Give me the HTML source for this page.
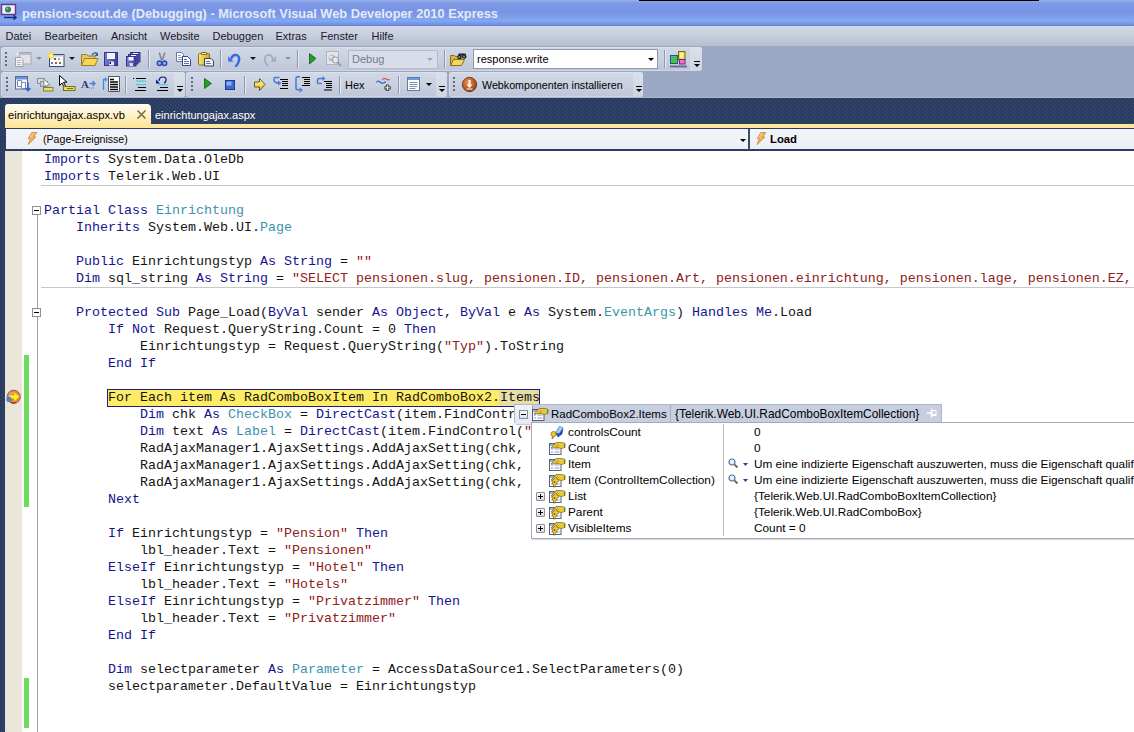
<!DOCTYPE html>
<html><head><meta charset="utf-8">
<style>
*{margin:0;padding:0;box-sizing:border-box}
html,body{width:1134px;height:732px;overflow:hidden;background:#9ba8c3;font-family:"Liberation Sans",sans-serif;position:relative}
.a{position:absolute}
svg{position:absolute;overflow:visible}
#title{left:0;top:0;width:1134px;height:26px;background:linear-gradient(#9ab3ec 0px,#7e9ae5 3px,#7793e3 12px,#7fa2ec 18px,#82a8ef 21px,#6f8be0 25px,#6580d8 26px)}
#blackbar{left:639px;top:0;width:400px;height:1px;background:#000}
#ttext{left:22px;top:5.7px;font-size:12.8px;font-weight:bold;color:#e3eafa;white-space:nowrap;line-height:16px}
#menu{left:0;top:26px;width:1134px;height:20px;background:linear-gradient(#d2d8e6,#c7cedf 50%,#b6bece)}
#menu span{position:absolute;top:4px;font-size:11px;line-height:13px;color:#1a1a2a}
.tb{position:absolute;border-radius:3px;background:linear-gradient(#d1d8e6,#c9d0e0 50%,#bec6d7);box-shadow:inset 0 0 0 1px rgba(255,255,255,0.25)}
.grip{position:absolute;width:2px;background:repeating-linear-gradient(#5f6b84 0 2px,transparent 2px 4px)}
.sep{position:absolute;width:1px;background:#8d98b0;box-shadow:1px 0 0 #e6eaf2}
.ovf{position:absolute;border-radius:0 3px 3px 0;background:linear-gradient(#dbe0ec,#cfd5e3)}
.ovf i{position:absolute;left:3px;top:14px;width:6px;height:1px;background:#000}
.ovf b{position:absolute;left:3px;top:17px;width:0;height:0;border-left:3px solid transparent;border-right:3px solid transparent;border-top:3px solid #000}
.dd{position:absolute;width:0;height:0;border-left:3px solid transparent;border-right:3px solid transparent;border-top:3px solid #000}
#tabarea{left:0;top:98px;width:1134px;height:634px;background-color:#2a3b60;background-image:radial-gradient(circle at 1.5px 1.5px,rgba(90,110,150,0.5) 0.5px,transparent 0.9px),radial-gradient(circle at 3.5px 3.5px,rgba(90,110,150,0.5) 0.5px,transparent 0.9px);background-size:4px 4px}
#tab{left:5px;top:104px;width:146px;height:21px;border-radius:3px 4px 0 0;background:linear-gradient(#fffdf4,#fff3cc 50%,#fde6a0)}
#band{left:5px;top:124px;width:1129px;height:4px;background:#fde79c}
#nav{left:6px;top:129px;width:1128px;height:20px;background:linear-gradient(#f4f5fa,#eceef6)}
#code{left:5px;top:151px;width:1129px;height:581px;background:#fff}
#margin{left:5px;top:151px;width:17px;height:581px;background:#e9e6d9}
pre{position:absolute;left:44px;top:151px;font-family:"Liberation Mono",monospace;font-size:13.33px;line-height:17px;color:#141414;white-space:pre}
.k{color:#14148e}
.t{color:#3c94ac}
.s{color:#8e2020}
.hl{}
.hi{}
.sepl{position:absolute;left:41px;width:1093px;height:1px;background:#c8c8c8}
.cbox{position:absolute;left:32px;width:9px;height:9px;border:1px solid #909090;background:#fff}
.cbox:after{content:"";position:absolute;left:1px;top:3px;width:5px;height:1px;background:#000}
#dt{font-size:11.8px;color:#000}
.dtrow{position:absolute;height:16px;line-height:18px;white-space:nowrap}
.pbox{position:absolute;left:536px;width:9px;height:9px;border:1px solid #8a8e96;border-radius:1px;background:linear-gradient(#fff,#d8dade)}
.pbox:before{content:"";position:absolute;left:1px;top:3px;width:5px;height:1px;background:#000}
.pbox:after{content:"";position:absolute;left:3px;top:1px;width:1px;height:5px;background:#000}
</style></head><body>

<div id="title" class="a"></div>
<div id="blackbar" class="a"></div>
<svg style="left:0;top:0" width="24" height="26">
<rect x="1.5" y="4.5" width="14" height="10" fill="#f4ecf6" stroke="#5a3a8a" stroke-width="1.4"/>
<circle cx="8" cy="9.5" r="3" fill="#2e7a5a"/><circle cx="7.3" cy="8.6" r="1.2" fill="#6ac0a0"/>
<path d="M4 17.5H15.5M13.5 15.2L16.2 17.5L13.5 19.8" stroke="#1e2a8a" stroke-width="1.3" fill="none"/>
</svg>
<div id="ttext" class="a">pension-scout.de (Debugging) - Microsoft Visual Web Developer 2010 Express</div>
<div id="menu" class="a">
<span style="left:5.5px">Datei</span>
<span style="left:44.5px">Bearbeiten</span>
<span style="left:111px">Ansicht</span>
<span style="left:160px">Website</span>
<span style="left:212.5px">Debuggen</span>
<span style="left:275.5px">Extras</span>
<span style="left:320.5px">Fenster</span>
<span style="left:371.5px">Hilfe</span>
</div>

<!-- toolbar 1 -->
<div class="tb" style="left:1px;top:47px;width:701px;height:24px"></div>
<div class="ovf" style="left:690px;top:47px;width:12px;height:24px"><i style="left:4px"></i><b style="left:4px"></b></div>
<div class="grip" style="left:5px;top:52px;height:14px"></div>
<svg style="left:15px;top:52px" width="17" height="15">
<rect x="4.5" y="0.5" width="11.5" height="11.5" fill="#e2e4ea" stroke="#a4a8b0"/><rect x="5" y="1" width="10.5" height="2" fill="#b8bcc4"/>
<path d="M0.5 5.5h5.5l2 2v7h-7.5z" fill="#f2f2f4" stroke="#9ca0a8"/><path d="M2 8.5h4M2 10.5h4M2 12.5h4" stroke="#b0b4bc"/>
<path d="M2.5 0v4M0.5 2h4M1 0.5l3 3M4 0.5l-3 3" stroke="#e8e8ec" stroke-width="0.8"/>
</svg>
<div class="dd" style="left:36px;top:57px;border-top-color:#8a909c"></div>
<svg style="left:47px;top:52px" width="18" height="15">
<rect x="2.5" y="2.5" width="14.5" height="12" fill="#fbfbfd" stroke="#3a4a7a"/><rect x="3" y="3" width="14" height="1.5" fill="#b8c4e0"/>
<rect x="7" y="6" width="2" height="2" fill="#4a5ac0"/><rect x="11" y="6" width="2" height="2" fill="#e8a030"/>
<rect x="4" y="10" width="2" height="2" fill="#3a8ae0"/><rect x="8" y="10" width="2" height="2" fill="#d04a20"/><rect x="12" y="10" width="2" height="2" fill="#30a030"/>
<path d="M4 0v7.5M0.3 3.7h7.5M1.3 1l5.4 5.4M6.7 1l-5.4 5.4" stroke="#f4d838" stroke-width="1.4"/><circle cx="4" cy="3.7" r="1.6" fill="#fff8b0"/>
</svg>
<div class="dd" style="left:69px;top:57px;border-top-color:#10182a"></div>
<svg style="left:81px;top:51px" width="18" height="16">
<path d="M0.5 3.5h5l1.5 1.5h7v9.5h-13.5z" fill="#e8c860" stroke="#9a7a30"/>
<path d="M0.5 14.5l3-7h13.5l-3 7z" fill="#f8d850" stroke="#a08030"/>
<path d="M11 4q3-4 5.5-0.5" stroke="#3a5aa8" stroke-width="1.5" fill="none"/><path d="M17 1.5v3.5h-3.5z" fill="#3a5aa8"/>
</svg>
<svg style="left:104px;top:52px" width="15" height="14">
<defs><linearGradient id="fl" x1="0" x2="1"><stop offset="0" stop-color="#7a7ad8"/><stop offset="1" stop-color="#3c3ca0"/></linearGradient></defs>
<rect x="0.5" y="0.5" width="13" height="13" fill="url(#fl)" stroke="#34348a"/>
<rect x="3" y="1" width="8" height="6" fill="#f2f4fc"/>
<rect x="5" y="9.5" width="5" height="4" fill="#e8e8f2"/><rect x="5.5" y="10" width="1.5" height="2" fill="#101030"/>
</svg>
<svg style="left:126px;top:52px" width="15" height="15">
<rect x="4.5" y="0.5" width="9.5" height="9.5" fill="#5a5ac0" stroke="#34348a"/><rect x="7" y="1" width="5" height="1.5" fill="#f0f2fc"/>
<rect x="2.5" y="2.5" width="9.5" height="9.5" fill="#5252b8" stroke="#34348a"/><rect x="5" y="3" width="5" height="1.5" fill="#f0f2fc"/>
<rect x="0.5" y="4.5" width="9.5" height="9.5" fill="url(#fl)" stroke="#34348a"/>
<rect x="2.5" y="5" width="5" height="3.5" fill="#f2f4fc"/><rect x="3.5" y="11" width="3.5" height="3" fill="#d8d8e8"/>
</svg>
<div class="sep" style="left:148px;top:50px;height:18px"></div>
<svg style="left:156px;top:52px" width="12" height="15">
<path d="M3.2 0.5L5.6 8M8.8 0.5L6.4 8" stroke="#80848e" stroke-width="1.5"/>
<circle cx="3.5" cy="11.3" r="2.2" fill="#a0b8f0" stroke="#3050b8" stroke-width="1.6"/>
<circle cx="8.5" cy="11.3" r="2.2" fill="#a0b8f0" stroke="#3050b8" stroke-width="1.6"/>
</svg>
<svg style="left:176px;top:52px" width="16" height="14">
<path d="M0.5 0.5h5l2 2v7h-7z" fill="#fff" stroke="#6a78a0"/><path d="M2 3.5h3M2 5.5h4M2 7.5h4" stroke="#90a0c8"/>
<path d="M6.5 4.5h5l3 3v6h-8z" fill="#fff" stroke="#34448a"/><path d="M8 7.5h3M8 9.5h5M8 11.5h5" stroke="#5a70b8"/>
</svg>
<svg style="left:198px;top:51px" width="17" height="16">
<defs><linearGradient id="cb" x1="0" x2="1"><stop offset="0" stop-color="#f8e880"/><stop offset="1" stop-color="#d0a818"/></linearGradient></defs>
<rect x="0.5" y="2.5" width="11" height="11.5" rx="1" fill="url(#cb)" stroke="#8a7020"/>
<path d="M3.5 3.5v-2h5v2z" fill="#f8f0b0" stroke="#8a7020"/><circle cx="6" cy="1.6" r="0.8" fill="#8a7020"/>
<path d="M6.5 7.5h6.5l2.5 2.5v5h-9z" fill="#f0f2f6" stroke="#38405a"/><path d="M8 10.5h4M8 12.5h5" stroke="#6a7898"/>
</svg>
<div class="sep" style="left:220px;top:50px;height:18px"></div>
<svg style="left:228px;top:52px" width="14" height="15">
<path d="M3 7.5q1-5 5.5-4.5q4 1.5 2 7q-1 2.5-2.5 4" stroke="#3a6ae0" stroke-width="2.4" fill="none" stroke-linecap="round"/>
<path d="M0 4.2v5.6h5.6z" fill="#4a7ae8"/>
</svg>
<div class="dd" style="left:250px;top:57px;border-top-color:#10182a"></div>
<svg style="left:263px;top:52px" width="14" height="15">
<path d="M10 7.5q-1-5-5.5-4.5q-4 1.5-2 7q1 2.5 2.5 4" stroke="#a8acb8" stroke-width="1.8" fill="none"/>
<path d="M13 4.2v5.6h-5.6z" fill="#a8acb8"/>
</svg>
<div class="dd" style="left:285px;top:57px;border-top-color:#8a909c"></div>
<div class="sep" style="left:297px;top:50px;height:18px"></div>
<svg style="left:309px;top:53px" width="8" height="12"><path d="M0.5 0.5L7 5.5L0.5 11z" fill="#20a020" stroke="#106010" stroke-width="0.8"/></svg>
<svg style="left:326px;top:51px" width="17" height="17">
<rect x="0.5" y="0.5" width="12" height="13" fill="#e4e6ec" stroke="#b0b4bc"/>
<circle cx="6" cy="7" r="3.5" fill="#b8bcc4"/><circle cx="5" cy="6" r="1.5" fill="#e8eaee"/>
<circle cx="9.5" cy="9" r="3" fill="#e8eaee" stroke="#a0a4ac" stroke-width="1.2"/>
<path d="M11.5 11.5l3.5 3.5" stroke="#90949c" stroke-width="1.6"/>
</svg>
<div class="a" style="left:348px;top:50px;width:90px;height:19px;border:1px solid #b4bccc;background:#d8dde9"></div>
<div class="a" style="left:352px;top:52px;font-size:11px;line-height:14px;color:#767c8a">Debug</div>
<div class="dd" style="left:427px;top:58px;border-top-color:#a0a6b0"></div>
<div class="sep" style="left:444px;top:50px;height:18px"></div>
<svg style="left:450px;top:51px" width="17" height="16">
<path d="M0.5 4.5h4l1 1h5v9h-10z" fill="#d8b448" stroke="#8a7020"/>
<path d="M0.5 14.5l3-6h11l-3 6z" fill="#f4d860" stroke="#8a7020"/>
<path d="M8.5 3.5h7" stroke="#202020" stroke-width="2"/>
<circle cx="9.5" cy="6" r="2.3" fill="#202020"/><circle cx="14.2" cy="5.5" r="2.3" fill="#202020"/>
<circle cx="9.3" cy="6" r="0.9" fill="#a0a0a0"/><circle cx="14" cy="5.5" r="0.9" fill="#a0a0a0"/>
</svg>
<div class="a" style="left:473px;top:49px;width:185px;height:20px;border:1px solid #8d97ad;background:#fff"></div>
<div class="a" style="left:477px;top:52px;font-size:11px;line-height:14px;color:#000">response.write</div>
<div class="dd" style="left:648px;top:58px;border-top-color:#000"></div>
<div class="sep" style="left:664px;top:50px;height:18px"></div>
<svg style="left:670px;top:51px" width="19" height="17">
<rect x="0.5" y="4.5" width="7" height="8" fill="#40b8d0" stroke="#205a78"/>
<rect x="1.5" y="6" width="5" height="6" fill="#48c040"/>
<rect x="8.5" y="0.5" width="6.5" height="8" fill="#f0d838" stroke="#7a6a10"/>
<rect x="10" y="2" width="3.5" height="5" fill="#f8f0a0"/>
<rect x="9.5" y="8.5" width="5.5" height="4.5" fill="#f070d0" stroke="#80207a"/>
<path d="M0 15.5h17" stroke="#6a6a98" stroke-width="2"/>
</svg>

<!-- toolbar 2a -->
<div class="tb" style="left:1px;top:72px;width:184px;height:25px"></div>
<div class="ovf" style="left:174px;top:72px;width:11px;height:25px"><i style="left:3px"></i><b style="left:3px"></b></div>
<div class="grip" style="left:6px;top:77px;height:14px"></div>
<svg style="left:15px;top:76px" width="16" height="16">
<rect x="0.5" y="0.5" width="12" height="12.5" fill="#f4f6fa" stroke="#5a6a98"/><rect x="1" y="1" width="11" height="2.5" fill="#6a94e0"/>
<path d="M2.5 4.5h4v6h-4z" fill="#fff" stroke="#7888b0"/><path d="M6.5 6.5h4v6h-4z" fill="#fff" stroke="#7888b0"/>
<path d="M13 6.5v8M10.5 12l2.5 2.8l2.5-2.8" stroke="#2a5ac8" stroke-width="1.4" fill="none"/>
</svg>
<svg style="left:37px;top:76px" width="17" height="16">
<rect x="0.5" y="2.5" width="7" height="5" fill="#d8dae0" stroke="#8a8e98"/>
<rect x="3.5" y="5.5" width="7" height="5" fill="#c8cad0" stroke="#8a8e98"/>
<path d="M7 3l6 6h-3l2 4h-1.5l-2-4l-1.5 2z" fill="#fff" stroke="#6a6e78" stroke-width="0.7"/>
<rect x="6.5" y="11.5" width="9.5" height="3.5" fill="#e8e070" stroke="#808030"/>
</svg>
<svg style="left:59px;top:75px" width="17" height="17">
<path d="M0.5 0.5v10l2.5-2.5l2 4l1.5-0.8l-2-4h3.5z" fill="#fff" stroke="#000"/>
<rect x="4.5" y="11.5" width="11.5" height="4" fill="#e8e050" stroke="#707020"/>
<path d="M8 13.5h6" stroke="#707020"/>
</svg>
<svg style="left:81px;top:78px" width="16" height="12">
<text x="0" y="10" font-family="Liberation Serif" font-weight="bold" font-size="11" fill="#2a3a80">A</text>
<path d="M8.5 5.5h5M11.5 3l2.5 2.5l-2.5 2.5" stroke="#5a7ad0" stroke-width="1.3" fill="none"/>
<path d="M8 10h1M10 10h1M12 10h1" stroke="#5a7ad0"/>
</svg>
<svg style="left:102px;top:76px" width="18" height="16">
<path d="M1.5 14v-10.5h2.5" stroke="#3a90e0" stroke-width="1.3" fill="none"/><path d="M3 1l2.5 2.5l-2.5 2.5z" fill="#3a90e0"/>
<path d="M6.5 0.5h11v15h-11z" fill="#fff" stroke="#505560"/>
<path d="M8 3.5h4M8 6h8M8 8.5h8M8 11h8M8 13.5h8" stroke="#000" stroke-width="1.4"/>
</svg>
<div class="sep" style="left:125px;top:76px;height:18px"></div>
<svg style="left:132px;top:72px" width="16" height="22">
<path d="M1 6.5h1.2M4 6.5h10" stroke="#000" stroke-width="1.1"/>
<path d="M4 9.2h10M4 12.7h10" stroke="#48d0d8" stroke-width="1.2"/>
<path d="M6 15.5h8M3 18.5h11" stroke="#000" stroke-width="1.1"/>
</svg>
<svg style="left:155px;top:72px" width="15" height="22">
<path d="M4 9q0-4 4-4q3.5 0 3 3.5q-0.5 2-2 2.5" stroke="#101080" stroke-width="1.2" fill="none"/>
<path d="M1 7.5v4h4z" fill="#101080"/>
<path d="M3 12.7h10" stroke="#48d0d8" stroke-width="1.2"/>
<path d="M5 15.5h8M2 18.5h11" stroke="#000" stroke-width="1.1"/>
</svg>

<!-- toolbar 2b -->
<div class="tb" style="left:186px;top:72px;width:261px;height:25px"></div>
<div class="ovf" style="left:436px;top:72px;width:11px;height:25px"><i></i><b></b></div>
<div class="grip" style="left:191px;top:77px;height:14px"></div>
<svg style="left:204px;top:78px" width="9" height="12"><path d="M0.5 0.5L7.5 5.5L0.5 10.5z" fill="#20a020" stroke="#106010" stroke-width="0.8"/></svg>
<svg style="left:225px;top:80px" width="10" height="10"><rect x="0.5" y="0.5" width="9" height="9" fill="#3a6ad8" stroke="#203a90"/><rect x="1.5" y="1.5" width="5" height="4" fill="#8ab0f0"/></svg>
<div class="sep" style="left:244px;top:76px;height:18px"></div>
<svg style="left:254px;top:78px" width="12" height="13">
<defs><linearGradient id="ya" x1="0" x2="0" y1="0" y2="1"><stop offset="0" stop-color="#fff8b0"/><stop offset="1" stop-color="#e8c020"/></linearGradient></defs>
<path d="M0.5 4h5v-3.5l5.5 6l-5.5 6v-3.5h-5z" fill="url(#ya)" stroke="#5a4a10" stroke-width="0.9"/>
</svg>
<svg style="left:273px;top:76px" width="16" height="14">
<path d="M6.5 1.5h-4q-2 0-1.5 3q0.5 2.5 5 2.5" stroke="#4a7ad8" stroke-width="1.5" fill="none"/><path d="M5 4.5l3.5 2.5l-3.5 2.5z" fill="#4a7ad8"/>
<path d="M7 3.5h8M9 5.5h6M9 7.5h6M9 9.5h6M7 12.5h8" stroke="#000" stroke-width="1.2"/>
</svg>
<svg style="left:295px;top:76px" width="16" height="17">
<path d="M5 0.8h-2.5q-1.5 0-1.5 1.5v10q0 1.5 1.5 1.5h2" stroke="#4a7ad8" stroke-width="1.5" fill="none"/><path d="M4.5 11.5l3.5 2.5l-3.5 2.5z" fill="#4a7ad8"/>
<path d="M7 1.5h8M9 3.5h6M9 5.5h6M9 7.5h6M7 9.5h8" stroke="#000" stroke-width="1.2"/>
</svg>
<svg style="left:316px;top:76px" width="17" height="16">
<path d="M1.5 7v-2.5q0-2 2-2h4" stroke="#4a7ad8" stroke-width="1.5" fill="none"/><path d="M6.5 0l3 2.5l-3 2.5z" fill="#4a7ad8"/>
<path d="M1 7.5h5" stroke="#4a7ad8" stroke-width="1.3"/>
<path d="M8 5.5h8M10 7.5h6M10 9.5h6M10 11.5h6M8 14h8" stroke="#000" stroke-width="1.2"/>
</svg>
<div class="sep" style="left:339px;top:76px;height:18px"></div>
<div class="a" style="left:345px;top:79px;font-size:11px;line-height:13px;color:#000">Hex</div>
<svg style="left:376px;top:77px" width="17" height="15">
<path d="M0.5 5.5q1.5-2.5 3.5-0.5t3.5 1q1.5-1 2.5-1" stroke="#3a6ad8" stroke-width="1.3" fill="none"/>
<path d="M6 3q2-2.5 4-1t4 0.5" stroke="#e05050" stroke-width="1.2" fill="none"/>
<path d="M11.5 7.5v6.5M8.3 10.8h6.5" stroke="#505050" stroke-width="3.2"/>
<path d="M11.5 8.5v4.5M9.3 10.8h4.5" stroke="#e8e8e8" stroke-width="1.1"/>
</svg>
<div class="sep" style="left:398px;top:76px;height:18px"></div>
<svg style="left:407px;top:77px" width="14" height="15">
<rect x="0.5" y="0.5" width="12" height="13" fill="#fbfcfe" stroke="#6a7a9a"/><rect x="1" y="1" width="11" height="2" fill="#6a9ae0"/>
<path d="M2.5 5.5h8M2.5 7.5h8M2.5 9.5h8M2.5 11.5h6" stroke="#8090a8"/>
</svg>
<div class="dd" style="left:426px;top:83px;border-top-color:#000"></div>

<!-- toolbar 2c -->
<div class="tb" style="left:449px;top:72px;width:194px;height:25px"></div>
<div class="ovf" style="left:633px;top:72px;width:10px;height:25px"><i style="left:2.5px"></i><b style="left:2.5px"></b></div>
<div class="grip" style="left:453px;top:77px;height:14px"></div>
<svg style="left:462px;top:77px" width="16" height="16">
<defs><radialGradient id="bb" cx="0.4" cy="0.35" r="0.7"><stop offset="0" stop-color="#f09050"/><stop offset="1" stop-color="#9a3810"/></radialGradient></defs>
<circle cx="7.5" cy="7.5" r="7.2" fill="url(#bb)" stroke="#6a2a10" stroke-width="0.8"/>
<path d="M7.5 3v6" stroke="#fff" stroke-width="2"/><path d="M4.5 7.5h6l-3 3.5z" fill="#fff"/>
<path d="M4.5 12h6" stroke="#fff" stroke-width="1"/>
</svg>
<div class="a" style="left:482px;top:79px;font-size:10.7px;line-height:13px;color:#000;white-space:nowrap">Webkomponenten installieren</div>

<!-- tabs -->
<div class="a" style="left:0;top:97px;width:1134px;height:1px;background:#aeb8cc"></div>
<div id="tabarea" class="a"></div>
<div id="tab" class="a"></div>
<div id="band" class="a"></div>
<div class="a" style="left:8px;top:108px;font-size:11.2px;line-height:14px;color:#000;white-space:nowrap">einrichtungajax.aspx.vb</div>
<svg style="left:137px;top:110px" width="9" height="9"><path d="M0.5 0.5L8.5 8.5M8.5 0.5L0.5 8.5" stroke="#786a38" stroke-width="1.5"/></svg>
<div class="a" style="left:155px;top:108px;font-size:11px;line-height:14px;color:#fff;white-space:nowrap">einrichtungajax.aspx</div>

<!-- nav bar -->
<div id="nav" class="a"></div>
<div class="a" style="left:748px;top:129px;width:2px;height:21px;background:#3c4a6c"></div>
<svg style="left:27px;top:132px" width="11" height="13"><defs><linearGradient id="bg27" x1="0" x2="1" y1="0" y2="1"><stop offset="0" stop-color="#fce08a"/><stop offset="1" stop-color="#e08a30"/></linearGradient></defs><path d="M4.8 0.5H9.8L6.6 5H8.8L1.2 12.5L3.4 6.6H1.2Z" fill="url(#bg27)" stroke="#c07828" stroke-width="0.7"/></svg>
<div class="a" style="left:43px;top:133px;font-size:10.6px;line-height:13px;color:#000;white-space:nowrap">(Page-Ereignisse)</div>
<div class="dd" style="left:740px;top:139px;border-top-color:#000"></div>
<svg style="left:756px;top:132px" width="11" height="13"><defs><linearGradient id="bg756" x1="0" x2="1" y1="0" y2="1"><stop offset="0" stop-color="#fce08a"/><stop offset="1" stop-color="#e08a30"/></linearGradient></defs><path d="M4.8 0.5H9.8L6.6 5H8.8L1.2 12.5L3.4 6.6H1.2Z" fill="url(#bg756)" stroke="#c07828" stroke-width="0.7"/></svg>
<div class="a" style="left:770px;top:133px;font-size:11.3px;font-weight:bold;line-height:13px;color:#000;white-space:nowrap">Load</div>

<!-- code area -->
<div id="code" class="a"></div>
<div id="margin" class="a"></div>
<div class="a" style="left:24px;top:355px;width:5px;height:152px;background:#6cdc5c"></div>
<div class="a" style="left:24px;top:678px;width:5px;height:50px;background:#6cdc5c"></div>
<div class="a" style="left:37px;top:215px;width:1px;height:517px;background:#a0a0a0"></div>
<div class="a" style="left:107px;top:389px;width:433px;height:18px;border:1px solid #1c1c88;background:#fdec64"></div>
<div class="a" style="left:499px;top:390px;width:40px;height:16px;background:#e6dea4"></div>
<div class="sepl" style="top:185px"></div>
<div class="sepl" style="top:287px"></div>
<div class="cbox" style="top:206px"></div>
<div class="cbox" style="top:308px"></div>
<svg style="left:6px;top:389px" width="16" height="16">
<circle cx="7.7" cy="7.8" r="6.6" fill="#d88850" stroke="#a05030" stroke-width="0.9"/>
<path d="M3.5 5.2q3-2.5 6 0" stroke="#f0a0a0" stroke-width="1.5" fill="none"/>
<path d="M3 6h5v-3.2l5.6 5l-5.6 5v-3h-5z" fill="#fff21a" stroke="#d09010" stroke-width="0.5"/>
<circle cx="3" cy="10.4" r="2.6" fill="#5080d0"/>
<path d="M5 13.5q3 1 5 0" stroke="#b03020" stroke-width="1.2" fill="none"/>
</svg>

<pre><span class="k">Imports</span> System.Data.OleDb
<span class="k">Imports</span> Telerik.Web.UI

<span class="k">Partial</span> <span class="k">Class</span> <span class="t">Einrichtung</span>
    <span class="k">Inherits</span> System.Web.UI.<span class="t">Page</span>

    <span class="k">Public</span> Einrichtungstyp <span class="k">As</span> <span class="k">String</span> = <span class="s">""</span>
    <span class="k">Dim</span> sql_string <span class="k">As</span> <span class="k">String</span> = <span class="s">"SELECT pensionen.slug, pensionen.ID, pensionen.Art, pensionen.einrichtung, pensionen.lage, pensionen.EZ,</span>

    <span class="k">Protected</span> <span class="k">Sub</span> Page_Load(<span class="k">ByVal</span> sender <span class="k">As</span> <span class="k">Object</span>, <span class="k">ByVal</span> e <span class="k">As</span> System.<span class="t">EventArgs</span>) <span class="k">Handles</span> <span class="k">Me</span>.Load
        <span class="k">If</span> <span class="k">Not</span> Request.QueryString.Count = 0 <span class="k">Then</span>
            Einrichtungstyp = Request.QueryString(<span class="s">"Typ"</span>).ToString
        <span class="k">End</span> <span class="k">If</span>

        <span class="hl">For Each item As RadComboBoxItem In RadComboBox2.<span class="hi">Items</span></span>
            <span class="k">Dim</span> chk <span class="k">As</span> <span class="t">CheckBox</span> = <span class="k">DirectCast</span>(item.FindControl(<span class="s">"chk"</span>), <span class="t">CheckBox</span>)
            <span class="k">Dim</span> text <span class="k">As</span> <span class="t">Label</span> = <span class="k">DirectCast</span>(item.FindControl(<span class="s">"lbl"</span>), <span class="t">Label</span>)
            RadAjaxManager1.AjaxSettings.AddAjaxSetting(chk, text)
            RadAjaxManager1.AjaxSettings.AddAjaxSetting(chk, text)
            RadAjaxManager1.AjaxSettings.AddAjaxSetting(chk, text)
        <span class="k">Next</span>

        <span class="k">If</span> Einrichtungstyp = <span class="s">"Pension"</span> <span class="k">Then</span>
            lbl_header.Text = <span class="s">"Pensionen"</span>
        <span class="k">ElseIf</span> Einrichtungstyp = <span class="s">"Hotel"</span> <span class="k">Then</span>
            lbl_header.Text = <span class="s">"Hotels"</span>
        <span class="k">ElseIf</span> Einrichtungstyp = <span class="s">"Privatzimmer"</span> <span class="k">Then</span>
            lbl_header.Text = <span class="s">"Privatzimmer"</span>
        <span class="k">End</span> <span class="k">If</span>

        <span class="k">Dim</span> selectparameter <span class="k">As</span> <span class="t">Parameter</span> = AccessDataSource1.SelectParameters(0)
        selectparameter.DefaultValue = Einrichtungstyp

</pre>
<!-- datatip -->
<div id="dt">
<div class="a" style="left:514px;top:404px;width:428px;height:19px;border:1px solid #b0b8c8;background:#c6cee0"></div>
<div class="a" style="left:515px;top:405px;width:17px;height:19px;background:linear-gradient(#f0f2f8,#e6e9f1);box-shadow:1px 1px 1px rgba(0,0,0,0.2)"></div>
<div class="a" style="left:519px;top:410px;width:9px;height:9px;border:1px solid #8890a0;background:linear-gradient(#fff,#dde0e8)"></div>
<div class="a" style="left:521px;top:414px;width:5px;height:1px;background:#000"></div>
<svg style="left:532px;top:405px" width="17" height="17"><rect x="0.5" y="4.5" width="11.5" height="11" fill="#fff" stroke="#506080"/><rect x="1" y="5" width="10.5" height="2" fill="#98b0e0"/><path d="M2 10h2M5.5 10h5M2 13h2M5.5 13h5" stroke="#8898b8"/><path d="M2 9L7 3.5H13.5L16 4.5V8.5L12.5 9.5L9 8.5Z" fill="#ecc838" stroke="#7a6418" stroke-width="0.7"/><path d="M4 7l2-2M6 8l3-3M8 8l2-2" stroke="#a08a20" stroke-width="0.6"/><path d="M15.5 4.5v4" stroke="#4a9a3a" stroke-width="1.2"/></svg>
<div class="dtrow" style="left:551px;top:406px;line-height:17px;font-size:11.5px">RadComboBox2.Items</div>
<div class="a" style="left:670px;top:405px;width:1px;height:17px;background:#a8b0c0"></div>
<div class="dtrow" style="left:675px;top:406px;line-height:17px;font-size:11.9px">{Telerik.Web.UI.RadComboBoxItemCollection}</div>
<svg style="left:927px;top:408px" width="11" height="10"><path d="M0 5h4" stroke="#fff" stroke-width="1.6"/><rect x="4.5" y="2" width="5" height="6" fill="#fff"/><rect x="5.5" y="3" width="3" height="3" fill="#c6cee0"/><path d="M4.5 0.5v9" stroke="#fff" stroke-width="1.4"/></svg>
<div class="a" style="left:531px;top:422px;width:603px;height:117px;border:1px solid #a8acb8;border-right:none;background:#fff;box-shadow:1px 1px 1px rgba(0,0,0,0.15)"></div>
<div class="a" style="left:723px;top:424px;width:1px;height:112px;background:#b8b8b8"></div>
<svg style="left:549px;top:423px" width="16" height="16"><path d="M6.5 9.5L10.5 3.5L14 5L13 11L9 14Z" fill="#2a50c0" stroke="#1a3080" stroke-width="0.6"/><path d="M6.5 9.5L10.5 3.5L14 5L10 10.5Z" fill="#a8c8f0"/><circle cx="4.5" cy="11" r="2.6" fill="#f0c838" stroke="#8a6a18" stroke-width="0.7"/><path d="M3.5 13l-0.5 3l2-2" stroke="#8a6a18" stroke-width="0.8" fill="#f0c838"/></svg>
<div class="dtrow" style="left:568px;top:423px">controlsCount</div>
<div class="dtrow" style="left:754px;top:423px">0</div>
<svg style="left:549px;top:439px" width="17" height="17"><rect x="0.5" y="4.5" width="11.5" height="11" fill="#fff" stroke="#506080"/><rect x="1" y="5" width="10.5" height="2" fill="#98b0e0"/><path d="M2 10h2M5.5 10h5M2 13h2M5.5 13h5" stroke="#8898b8"/><path d="M2 9L7 3.5H13.5L16 4.5V8.5L12.5 9.5L9 8.5Z" fill="#ecc838" stroke="#7a6418" stroke-width="0.7"/><path d="M4 7l2-2M6 8l3-3M8 8l2-2" stroke="#a08a20" stroke-width="0.6"/><path d="M15.5 4.5v4" stroke="#4a9a3a" stroke-width="1.2"/></svg>
<div class="dtrow" style="left:568px;top:439px">Count</div>
<div class="dtrow" style="left:754px;top:439px">0</div>
<svg style="left:549px;top:455px" width="17" height="17"><rect x="0.5" y="4.5" width="11.5" height="11" fill="#fff" stroke="#506080"/><rect x="1" y="5" width="10.5" height="2" fill="#98b0e0"/><path d="M2 10h2M5.5 10h5M2 13h2M5.5 13h5" stroke="#8898b8"/><path d="M2 9L7 3.5H13.5L16 4.5V8.5L12.5 9.5L9 8.5Z" fill="#ecc838" stroke="#7a6418" stroke-width="0.7"/><path d="M4 7l2-2M6 8l3-3M8 8l2-2" stroke="#a08a20" stroke-width="0.6"/><path d="M15.5 4.5v4" stroke="#4a9a3a" stroke-width="1.2"/></svg>
<div class="dtrow" style="left:568px;top:455px">Item</div>
<svg style="left:728px;top:458px" width="22" height="11"><circle cx="4" cy="4" r="3" fill="#e8f0ff" stroke="#5070a0" stroke-width="1.2"/><path d="M6.5 6.5l3 3" stroke="#806040" stroke-width="1.8"/><path d="M15 5h5l-2.5 3z" fill="#2040a0"/></svg>
<div class="dtrow" style="left:754px;top:455px">Um eine indizierte Eigenschaft auszuwerten, muss die Eigenschaft qualifiziert</div>
<svg style="left:549px;top:471px" width="17" height="17"><rect x="0.5" y="4.5" width="11.5" height="11" fill="#fff" stroke="#506080"/><rect x="1" y="5" width="10.5" height="2" fill="#98b0e0"/><path d="M2 10h2M5.5 10h5M2 13h2M5.5 13h5" stroke="#8898b8"/><path d="M2 9L7 3.5H13.5L16 4.5V8.5L12.5 9.5L9 8.5Z" fill="#ecc838" stroke="#7a6418" stroke-width="0.7"/><path d="M4 7l2-2M6 8l3-3M8 8l2-2" stroke="#a08a20" stroke-width="0.6"/><path d="M15.5 4.5v4" stroke="#4a9a3a" stroke-width="1.2"/><path d="M3 10L6.5 6.5L9.5 9.5L5 16.5Z" fill="#ecc838" stroke="#7a6418" stroke-width="0.7"/><circle cx="5.5" cy="11" r="0.9" fill="#7a6418"/></svg>
<div class="dtrow" style="left:568px;top:471px">Item (ControlItemCollection)</div>
<svg style="left:728px;top:474px" width="22" height="11"><circle cx="4" cy="4" r="3" fill="#e8f0ff" stroke="#5070a0" stroke-width="1.2"/><path d="M6.5 6.5l3 3" stroke="#806040" stroke-width="1.8"/><path d="M15 5h5l-2.5 3z" fill="#2040a0"/></svg>
<div class="dtrow" style="left:754px;top:471px">Um eine indizierte Eigenschaft auszuwerten, muss die Eigenschaft qualifiziert</div>
<div class="pbox" style="top:492px"></div>
<svg style="left:549px;top:487px" width="17" height="17"><rect x="0.5" y="4.5" width="11.5" height="11" fill="#fff" stroke="#506080"/><rect x="1" y="5" width="10.5" height="2" fill="#98b0e0"/><path d="M2 10h2M5.5 10h5M2 13h2M5.5 13h5" stroke="#8898b8"/><path d="M2 9L7 3.5H13.5L16 4.5V8.5L12.5 9.5L9 8.5Z" fill="#ecc838" stroke="#7a6418" stroke-width="0.7"/><path d="M4 7l2-2M6 8l3-3M8 8l2-2" stroke="#a08a20" stroke-width="0.6"/><path d="M15.5 4.5v4" stroke="#4a9a3a" stroke-width="1.2"/><path d="M3 10L6.5 6.5L9.5 9.5L5 16.5Z" fill="#ecc838" stroke="#7a6418" stroke-width="0.7"/><circle cx="5.5" cy="11" r="0.9" fill="#7a6418"/></svg>
<div class="dtrow" style="left:568px;top:487px">List</div>
<div class="dtrow" style="left:754px;top:487px">{Telerik.Web.UI.RadComboBoxItemCollection}</div>
<div class="pbox" style="top:508px"></div>
<svg style="left:549px;top:503px" width="17" height="17"><rect x="0.5" y="4.5" width="11.5" height="11" fill="#fff" stroke="#506080"/><rect x="1" y="5" width="10.5" height="2" fill="#98b0e0"/><path d="M2 10h2M5.5 10h5M2 13h2M5.5 13h5" stroke="#8898b8"/><path d="M2 9L7 3.5H13.5L16 4.5V8.5L12.5 9.5L9 8.5Z" fill="#ecc838" stroke="#7a6418" stroke-width="0.7"/><path d="M4 7l2-2M6 8l3-3M8 8l2-2" stroke="#a08a20" stroke-width="0.6"/><path d="M15.5 4.5v4" stroke="#4a9a3a" stroke-width="1.2"/><path d="M3 10L6.5 6.5L9.5 9.5L5 16.5Z" fill="#ecc838" stroke="#7a6418" stroke-width="0.7"/><circle cx="5.5" cy="11" r="0.9" fill="#7a6418"/></svg>
<div class="dtrow" style="left:568px;top:503px">Parent</div>
<div class="dtrow" style="left:754px;top:503px">{Telerik.Web.UI.RadComboBox}</div>
<div class="pbox" style="top:524px"></div>
<svg style="left:549px;top:519px" width="17" height="17"><rect x="0.5" y="4.5" width="11.5" height="11" fill="#fff" stroke="#506080"/><rect x="1" y="5" width="10.5" height="2" fill="#98b0e0"/><path d="M2 10h2M5.5 10h5M2 13h2M5.5 13h5" stroke="#8898b8"/><path d="M2 9L7 3.5H13.5L16 4.5V8.5L12.5 9.5L9 8.5Z" fill="#ecc838" stroke="#7a6418" stroke-width="0.7"/><path d="M4 7l2-2M6 8l3-3M8 8l2-2" stroke="#a08a20" stroke-width="0.6"/><path d="M15.5 4.5v4" stroke="#4a9a3a" stroke-width="1.2"/><path d="M3 10L6.5 6.5L9.5 9.5L5 16.5Z" fill="#ecc838" stroke="#7a6418" stroke-width="0.7"/><circle cx="5.5" cy="11" r="0.9" fill="#7a6418"/></svg>
<div class="dtrow" style="left:568px;top:519px">VisibleItems</div>
<div class="dtrow" style="left:754px;top:519px">Count = 0</div>
</div>

</body></html>
